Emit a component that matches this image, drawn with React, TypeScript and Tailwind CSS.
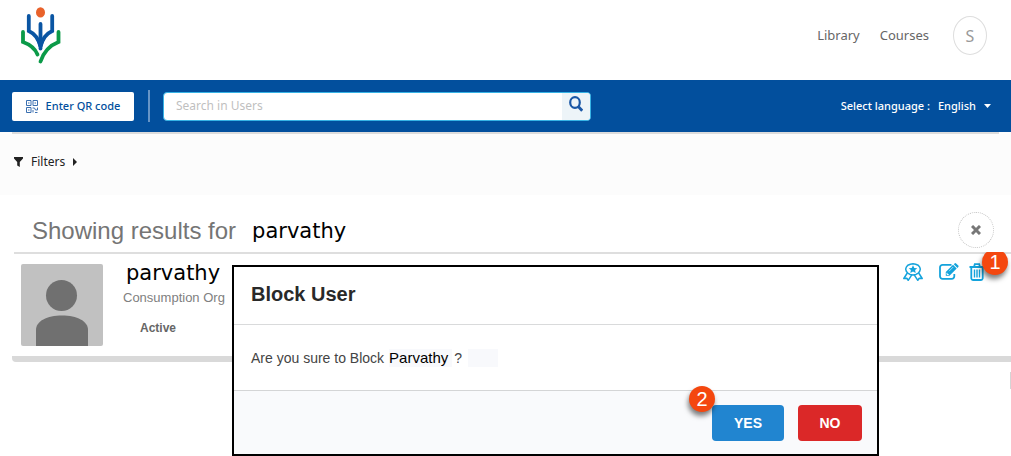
import type { ReactNode } from "react";

function Logo() {
  return (
    <svg width="42" height="58" viewBox="0 0 42 58" fill="none" strokeLinecap="round" aria-label="Home">
      <ellipse cx="20.5" cy="5.4" rx="4.5" ry="5.2" fill="#e9622b" />
      <g stroke="#0a55a3" strokeWidth="3.8">
        <path d="M8.8 9v15c5.500 2.500 9.500 6.500 11.700 15.500c2.200-9 6.200-13 11.700-15.500V9" />
        <path d="M20.500 17v24.500" />
      </g>
      <path d="M14 27.500l6.500 15.500 6.500-15.500-6.500 6z" fill="#0a55a3" />
      <path d="M3 25v10c7 2.500 12 6.500 14.500 12.500M38.500 25v10c-9 3.500-15 10.500-18 19.500" stroke="#0b9a48" strokeWidth="3.800" />
    </svg>
  );
}

function QrIcon() {
  return (
    <svg width="12" height="13" viewBox="0 0 12 13" fill="none" stroke="#3a6fb0" aria-hidden="true">
      <path d="M.5 .5h4.500v5H.5zM7 .5h4.500v5H7zM.5 7.500h4.500v5H.5z" />
      <path d="M2 3h1.500M8.500 3h1.500M2 10h1.500M6.500 8h2l1 2h2V7.500M7 12.500V10M9 12.500h2.500" />
    </svg>
  );
}

function AwardIcon() {
  return (
    <svg width="20" height="18" viewBox="0 0 20 18" fill="none" stroke="#14a3dc" strokeWidth="1.500" strokeLinejoin="round" aria-hidden="true">
      <path d="M10 .8l2.600.4 2.600 1 1.500 1.900.6 2-.6 2.100-1.500 1.900-2.200 1.300-3 .6-3-.6-2.200-1.300-1.500-1.900-.6-2.100.6-2 1.500-1.900 2.600-1z" />
      <path d="M4.300 10L.8 15.500l3-.2 1.400 2 3.600-5.400M15.700 10l3.500 5.500-3-.2-1.400 2-3.600-5.400" />
      <path d="M10 2.300l1.300 2.600 3 .3-2.200 1.900.6 2.800L10 8.500 7.300 9.900l.6-2.800-2.200-1.900 3-.3z" fill="#14a3dc" stroke="none" />
    </svg>
  );
}

function EditIcon() {
  return (
    <svg width="20" height="17" viewBox="0 0 20 17" fill="none" aria-hidden="true">
      <path d="M12.500 1.800H3.500A2.500 2.500 0 0 0 1 4.300v9A2.500 2.500 0 0 0 3.500 15.800h9.300a2.500 2.500 0 0 0 2.500-2.500v-2.300" stroke="#14a3dc" strokeWidth="1.800" />
      <path d="M6.800 9L14 1.800l3.700 3.700-7.200 7.200H6.800zM14.800 1.200l.8-.8q.8-.6 1.500 0l2.200 2.200q.6.800 0 1.500l-.9.900z" fill="#14a3dc" />
      <path d="M8 9.800v1.700h1.700" stroke="#fff" />
      <path d="M10 8.200l4.200-4.200" stroke="#fff" strokeWidth=".6" />
    </svg>
  );
}

function TrashIcon() {
  return (
    <svg width="16" height="18" viewBox="0 0 16 18" fill="none" stroke="#14a3dc" strokeWidth="1.800" aria-hidden="true">
      <path d="M.5 4h15M5 4l.8-2.800h4.400L11 4M2.300 4v11.300q.2 1.600 1.700 1.700h8q1.500-.1 1.700-1.700V4" />
      <path d="M5.500 6.500v8M8 6.500v8M10.500 6.500v8" strokeWidth="1.400" />
    </svg>
  );
}

function Avatar() {
  return (
    <svg width="82" height="82" viewBox="0 0 82 82" className="block shrink-0 rounded-xs bg-[#c1c1c1]" role="img" aria-label="User avatar">
      <circle cx="40.500" cy="31.500" r="15.500" fill="#707070" />
      <path d="M15 82V66c0-9 11-14.500 26-14.500S67 57 67 66v16z" fill="#707070" />
    </svg>
  );
}

function StepBadge({ children, className }: { children: ReactNode; className: string }) {
  return (
    <span
      className={`absolute flex size-[26px] items-center justify-center rounded-full bg-[#f4470f] font-['Liberation_Sans',sans-serif] text-xl leading-none text-white shadow-[-1px_4px_5px_rgba(0,0,0,0.5)] ${className}`}
    >
      {children}
    </span>
  );
}

export default function App() {
  return (
    <div className="relative overflow-hidden bg-white pb-[94px] font-['Liberation_Sans',sans-serif]">
      <header className="flex h-20 items-start justify-between pl-5 pr-6 pt-[7px] font-['Noto_Sans',sans-serif]">
        <Logo />
        <nav className="flex items-center pt-[9px] text-[13px] text-[#666]">
          <a href="#library" className="mr-5">Library</a>
          <a href="#courses" className="mr-6">Courses</a>
          <button className="flex h-[39px] w-[34px] items-center justify-center rounded-[50%] border border-[#dedede] text-base text-[#999]">S</button>
        </nav>
      </header>

      <div className="flex h-[52px] items-center bg-[#024f9d] pl-3 pr-5 font-['Noto_Sans',sans-serif] text-xs">
        <button className="flex h-[29px] w-[122px] items-center justify-center gap-2 rounded-xs bg-white text-[11px] font-medium text-[#024f9d]">
          <QrIcon />
          Enter QR code
        </button>
        <span className="ml-3.5 mr-[13px] h-8 w-0.5 bg-[#6795c6]" />
        <form className="flex h-[29px] w-[428px] overflow-hidden rounded border border-[#36b3e5] bg-white" onSubmit={(e) => e.preventDefault()}>
          <input aria-label="Search in Users" placeholder="Search in Users" className="min-w-0 flex-1 px-3 text-xs text-[#333] outline-none placeholder:text-[#bfbfbf]" />
          <button aria-label="Search" className="flex w-7 items-center justify-center bg-[#edf4f8] pb-1">
            <svg width="14" height="16" viewBox="0 0 14 16" fill="none" stroke="#1a57a6" strokeWidth="2.200" aria-hidden="true">
              <ellipse cx="6" cy="6.500" rx="4.800" ry="5.300" />
              <path d="M9.500 10.800l3.700 4" strokeWidth="2.800" />
            </svg>
          </button>
        </form>
        <div className="ml-auto flex items-center gap-2 text-[11px] font-medium text-white">
          <span>Select language :</span>
          <button className="flex items-center gap-2">
            English
            <svg width="7" height="4" viewBox="0 0 7 4" fill="currentColor" aria-hidden="true"><path d="M0 0h7L3.500 4z" /></svg>
          </button>
        </div>
      </div>

      <section className="h-[63px] bg-[#fcfcfc] font-['Noto_Sans',sans-serif]">
        <div className="mx-3 h-0.5 bg-[#dcdcdc]" />
        <button className="mt-5 flex items-center gap-2 pl-3.5 text-xs text-[#222]">
          <svg width="9" height="10" viewBox="0 0 9 10" fill="currentColor" aria-hidden="true"><path d="M0 0h9v1.500L5.800 5v5L3.200 8.500V5L0 1.500z" /></svg>
          Filters
          <svg width="4" height="8" viewBox="0 0 4 8" fill="currentColor" aria-hidden="true"><path d="M0 0l4 4-4 4z" /></svg>
        </button>
      </section>

      <div className="flex h-[57px] items-center justify-between pl-8 pr-[17px] pt-3">
        <h1 className="flex items-center gap-4 pt-0.5 text-2xl text-[#757575]">
          Showing results for
          <span className="font-['DejaVu_Sans',sans-serif] text-[21px] text-black">parvathy</span>
        </h1>
        <button aria-label="Clear search" className="flex size-9 items-center justify-center rounded-full border border-dotted border-[#c4c4c4]">
          <svg width="10" height="10" viewBox="0 0 10 10" stroke="#777" strokeWidth="3" aria-hidden="true"><path d="M1 1l8 8M9 1L1 9" /></svg>
        </button>
      </div>

      <article className="relative ml-3 flex h-[110px] overflow-hidden rounded-bl border-b-[6px] border-[#d9d9d9] pl-[9px] pt-3">
        <div className="absolute left-0.5 right-0 top-0 h-0.5 bg-[#dedede]" />
        <Avatar />
        <div className="pl-5">
          <h2 className="pl-[3px] font-['DejaVu_Sans',sans-serif] text-[21px] leading-[18px] text-black">parvathy</h2>
          <p className="pt-[7px] text-[13px] leading-[18px] text-[#808080]">Consumption Org</p>
          <p className="pl-[17px] pt-3 text-xs leading-[18px] font-bold text-[#666]">Active</p>
        </div>
        <div className="-mt-px ml-auto mr-[26px] flex items-start gap-2.5">
          <button aria-label="Award badge" className="mr-1.5"><AwardIcon /></button>
          <button aria-label="Edit user"><EditIcon /></button>
          <button aria-label="Block user"><TrashIcon /></button>
        </div>
        <StepBadge className="-top-[3px] right-[3px]">1</StepBadge>
      </article>

      <span className="absolute right-0 top-[372px] h-[17px] w-px bg-[#d4d4d4]" />

      <div role="dialog" aria-labelledby="dialog-title" className="absolute left-[232px] right-[132px] top-[265px] border-2 border-black bg-white">
        <h2 id="dialog-title" className="flex h-[58px] items-center border-b border-[#d9dadb] px-[17px] pb-1 text-xl font-bold text-[#292929]">Block User</h2>
        <p className="flex h-[65px] items-center px-[17px] text-sm text-[#444]">
          Are you sure to Block
          <span className="ml-[5px] bg-[#f8f9fc] pr-1 text-[15px] leading-[18px] text-black">Parvathy</span>
          <span className="ml-0.5">?</span>
          <span className="ml-1.5 h-[18px] w-[30px] bg-[#f8f9fc]" />
        </p>
        <footer className="relative flex h-16 items-center justify-end gap-3.5 border-t border-[#d4d5d6] bg-[#f9fafc] px-[15px] text-sm font-bold text-white">
          <button className="relative h-9 w-[72px] rounded bg-[#2185d0]">
            YES
            <StepBadge className="-left-[23px] -top-[19px] font-normal">2</StepBadge>
          </button>
          <button className="h-9 w-16 rounded bg-[#db2828]">NO</button>
        </footer>
      </div>
    </div>
  );
}
